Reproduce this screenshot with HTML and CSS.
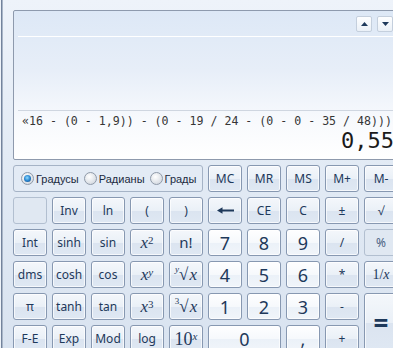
FILE: index.html
```html
<!DOCTYPE html>
<html>
<head>
    <meta charset="utf-8">
    <link rel="stylesheet" href="styles.css">
</head>
<body>
<div class="window">
    <div class="display">
        <div class="hist-bar">
            <span class="scroll"><svg width="7" height="4" viewBox="0 0 7 4"><path d="M3.5 0L7 4H0Z"/></svg></span>
            <span class="scroll"><svg width="7" height="4" viewBox="0 0 7 4"><path d="M0 0H7L3.5 4Z"/></svg></span>
        </div>
        <div class="history"></div>
        <div class="expr">«16 - (0 - 1,9)) - (0 - 19 / 24 - (0 - 0 - 35 / 48)))</div>
        <div class="result">0,55</div>
    </div>

    <div class="keys">
        <div class="units">
            <label class="radio"><span class="dot on"></span>Градусы</label>
            <label class="radio"><span class="dot"></span>Радианы</label>
            <label class="radio"><span class="dot"></span>Грады</label>
        </div>
        <button class="key">MC</button>
        <button class="key">MR</button>
        <button class="key">MS</button>
        <button class="key">M+</button>
        <button class="key">M-</button>

        <button class="key off"></button>
        <button class="key">Inv</button>
        <button class="key">ln</button>
        <button class="key">(</button>
        <button class="key">)</button>
        <button class="key"><svg width="17" height="7" viewBox="0 0 17 7"><path d="M0 3.5L5.5 0.3V2.4H17V4.6H5.5V6.7Z"/></svg></button>
        <button class="key">CE</button>
        <button class="key">C</button>
        <button class="key">±</button>
        <button class="key">√</button>

        <button class="key">Int</button>
        <button class="key">sinh</button>
        <button class="key">sin</button>
        <button class="key math"><i>x</i><sup>2</sup></button>
        <button class="key big">n!</button>
        <button class="key num">7</button>
        <button class="key num">8</button>
        <button class="key num">9</button>
        <button class="key">/</button>
        <button class="key off">%</button>

        <button class="key">dms</button>
        <button class="key">cosh</button>
        <button class="key">cos</button>
        <button class="key math"><i>x</i><sup><i>y</i></sup></button>
        <button class="key math"><sup class="pre"><i>y</i></sup><span class="rad">√</span><i>x</i></button>
        <button class="key num">4</button>
        <button class="key num">5</button>
        <button class="key num">6</button>
        <button class="key">*</button>
        <button class="key math small">1/<i>x</i></button>

        <button class="key">π</button>
        <button class="key">tanh</button>
        <button class="key">tan</button>
        <button class="key math"><i>x</i><sup>3</sup></button>
        <button class="key math"><sup class="pre">3</sup><span class="rad">√</span><i>x</i></button>
        <button class="key num">1</button>
        <button class="key num">2</button>
        <button class="key num">3</button>
        <button class="key">-</button>
        <button class="key equals">=</button>

        <button class="key">F-E</button>
        <button class="key">Exp</button>
        <button class="key">Mod</button>
        <button class="key">log</button>
        <button class="key math ten">10<sup><i>x</i></sup></button>
        <button class="key num zero">0</button>
        <button class="key num">,</button>
        <button class="key">+</button>
    </div>
</div>
</body>
</html>
```

FILE: styles.css
```css
html, body {
    margin: 0;
    height: 100%;
    overflow: hidden;
}

body {
    background: #eef3f9;
    font-family: "Noto Sans", "Open Sans", sans-serif;
}

.window {
    margin-left: 1px;
    border-left: 1px solid #73839c;
    box-shadow: inset 1px 0 #a9b6c8;
    padding: 10px 0 0 11px;
    height: 100%;
    box-sizing: border-box;
    background: linear-gradient(to bottom, #eef3fa 0, #e3ebf5 150px, #d9e3f0 100%);
}

/* display */
.display {
    width: 385px;
    height: 150px;
    box-sizing: border-box;
    border: 1px solid #8e9aad;
    border-radius: 2px;
    background: linear-gradient(to bottom, #dde8f6 0%, #e7eef8 40%, #f8fafd 75%, #ffffff 100%);
    overflow: hidden;
}

.hist-bar {
    height: 26px;
    box-sizing: border-box;
    margin: 0 4px;
    padding-top: 5px;
    border-bottom: 1px solid #ffffff;
    display: flex;
    justify-content: flex-end;
    align-items: flex-start;
    gap: 5px;
}

.scroll {
    width: 16px;
    height: 16px;
    box-sizing: border-box;
    border: 1px solid #c4cfdd;
    border-radius: 2px;
    background: linear-gradient(to bottom, #fdfeff, #eaf0f7);
    display: flex;
    justify-content: center;
    align-items: center;
}

.scroll svg {
    fill: #1e395b;
}

.history {
    height: 74px;
    box-sizing: border-box;
    margin: 0 4px;
    border-bottom: 1px solid #cfd6e0;
}

.expr {
    font-family: "DejaVu Sans Mono", monospace;
    font-size: 11.6px;
    line-height: 14px;
    padding: 3px 0 0 8px;
    white-space: nowrap;
    color: #363636;
}

.result {
    font-family: "DejaVu Sans Mono", monospace;
    font-size: 22px;
    line-height: 24px;
    margin-top: 1px;
    padding-right: 3px;
    text-align: right;
    color: #1a1a1a;
}

/* keypad */
.keys {
    margin-top: 5px;
    display: grid;
    grid-template-columns: repeat(10, 34px);
    grid-auto-rows: 27px;
    gap: 5px;
}

.units {
    grid-column: span 5;
    border: 1px solid #a5b3c6;
    border-radius: 3px;
    background: #e3ebf5;
    display: flex;
    align-items: center;
    padding-left: 7px;
    gap: 5px;
    font-family: "Liberation Sans", sans-serif;
    font-size: 11px;
    color: #1b2a3e;
    white-space: nowrap;
    overflow: hidden;
}

.radio {
    display: flex;
    align-items: center;
}

.dot {
    width: 13px;
    height: 13px;
    box-sizing: border-box;
    border: 1px solid #8f9aa9;
    border-radius: 50%;
    margin-right: 2px;
    background: radial-gradient(circle at 40% 35%, #ffffff, #dfe3e8 60%, #c9ced6);
    display: flex;
    justify-content: center;
    align-items: center;
}

.dot.on::after {
    content: "";
    width: 7px;
    height: 7px;
    border-radius: 50%;
    background: radial-gradient(circle at 45% 40%, #8fdcff, #2a86d0 50%, #0b3f78);
}

.key {
    padding: 0;
    border: 1px solid #8798b1;
    border-radius: 3px;
    background: linear-gradient(to bottom, #f4f7fb 0%, #eaf0f7 50%, #dbe4f0 51%, #dfe8f3 100%);
    box-shadow: inset 0 0 0 1px rgba(255, 255, 255, 0.7);
    color: #1e395b;
    font-family: "Noto Sans", "Open Sans", sans-serif;
    font-size: 12px;
    line-height: 1;
    display: flex;
    justify-content: center;
    align-items: center;
}

.key svg {
    fill: #1e395b;
}

.key.off {
    border-color: #b2bfd0;
    background: #e0e8f2;
    box-shadow: none;
    color: #4a6282;
}

.key.num {
    background: linear-gradient(to bottom, #fefeff 0%, #f6f9fc 50%, #ebf1f8 51%, #f1f5fa 100%);
    font-size: 18px;
}

.key.big {
    font-size: 15px;
}

.key.math {
    font-family: "Liberation Serif", "DejaVu Serif", serif;
    font-size: 17px;
}

.key.math.small {
    font-size: 14px;
}

.key.math sup {
    font-size: 11px;
    position: relative;
    top: -2px;
}

.key.math .pre {
    font-size: 9px;
    top: -5px;
}

.key.math .rad {
    margin-right: 1px;
}

.key.ten {
    font-size: 18px;
}

.key.zero {
    grid-column: span 2;
}

.key.equals {
    grid-row: span 2;
    font-size: 26px;
    font-weight: bold;
}
```
